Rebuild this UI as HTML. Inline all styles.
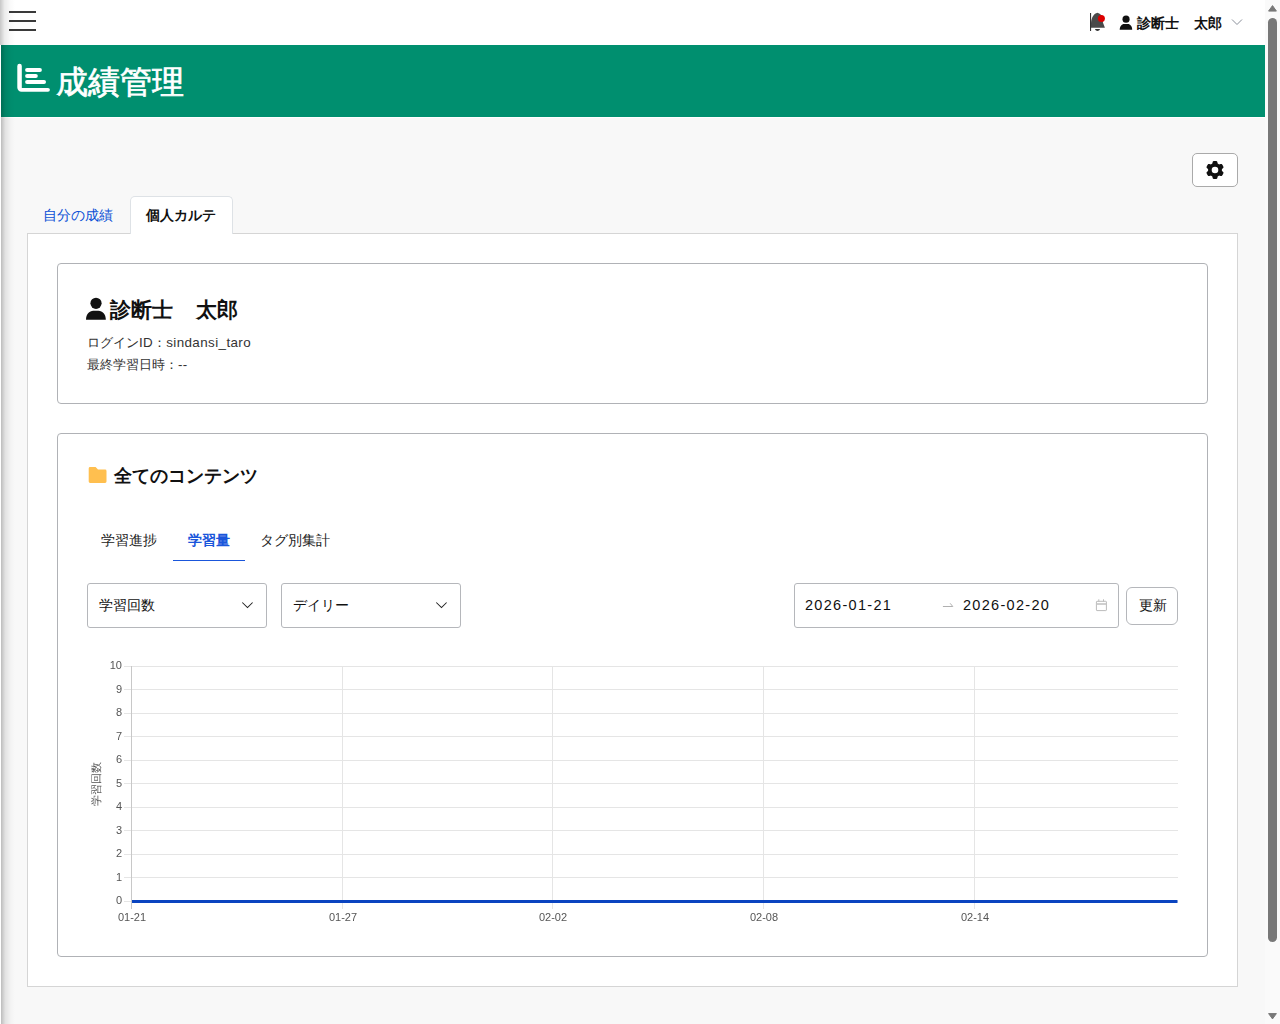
<!DOCTYPE html>
<html lang="ja">
<head>
<meta charset="utf-8">
<style>
html,body{margin:0;padding:0;width:1280px;height:1024px;overflow:hidden;}
body{position:relative;background:#f8f8f8;font-family:"Liberation Sans",sans-serif;color:#212529;}
.a{position:absolute;white-space:nowrap;}
#topbar{left:0;top:0;width:1265px;height:45px;background:#fff;}
#green{left:1px;top:45px;width:1264px;height:72px;background:#008f6f;}
#wline{left:1px;top:117px;width:1264px;height:1px;background:#fff;}
#shadow{left:1px;top:45px;width:14px;height:979px;background:linear-gradient(to right,rgba(0,0,0,.24),rgba(0,0,0,.09) 30%,rgba(0,0,0,.02) 70%,rgba(0,0,0,0) 100%);}
#shadow0{left:0;top:0;width:15px;height:45px;background:linear-gradient(to right,rgba(0,0,0,.22),rgba(0,0,0,.08) 30%,rgba(0,0,0,.02) 70%,rgba(0,0,0,0) 100%);}
#wcol{left:0;top:45px;width:1px;height:979px;background:#fff;}
.ham{left:9px;width:27px;height:2px;background:#3a3a3a;}
#title{left:56px;top:63px;font-size:32px;line-height:38px;color:#fff;font-weight:normal;-webkit-text-stroke:0.7px #fff;}
#user{left:1137px;top:13px;font-size:14px;line-height:20px;font-weight:bold;color:#111;}
#gearbtn{left:1192px;top:153px;width:44px;height:32px;border:1px solid #aaa;border-radius:5px;background:#fff;}
#tab1{left:43px;top:205px;font-size:14px;line-height:20px;color:#0b50d6;}
#tab2box{left:130px;top:196px;width:101px;height:37px;border:1px solid #dee2e6;border-bottom:none;border-radius:5px 5px 0 0;background:#fff;}
#tab2{left:146px;top:205px;font-size:14px;line-height:20px;color:#111;font-weight:bold;}
#content{left:27px;top:233px;width:1209px;height:752px;border:1px solid #d5d5d5;background:#fff;}
#tabcover{left:131px;top:233px;width:101px;height:1px;background:#fff;}
.card{border:1px solid #b0b2b6;border-radius:4px;background:#fff;}
#card1{left:57px;top:263px;width:1149px;height:139px;}
#card2{left:57px;top:433px;width:1149px;height:522px;}
#pname{left:110px;top:297px;font-size:21px;line-height:26px;font-weight:bold;color:#111;}
.info{left:87px;font-size:12.8px;line-height:18px;margin-top:1px;color:#333;}
.lat{font-size:13.4px;letter-spacing:0.4px;}
#ctitle{left:113.7px;top:465px;font-size:18px;line-height:22px;font-weight:bold;color:#111;}
.itab{top:530px;font-size:14px;line-height:20px;color:#222;}
#ul{left:173px;top:560px;width:72px;height:1px;background:#1a56db;}
.sel{top:583px;width:178px;height:43px;border:1px solid #b5b7bb;border-radius:3px;background:#fff;}
.seltxt{top:595.3px;font-size:14px;line-height:20px;color:#111;}
#dp{left:794px;top:583px;width:323px;height:43px;border:1px solid #b5b7bb;border-radius:3px;background:#fff;}
.dt{top:595px;font-size:14.5px;line-height:20px;color:#111;letter-spacing:1.3px;}
#upd{left:1126px;top:587px;width:50px;height:36px;border:1px solid #b5b7bb;border-radius:6px;background:#fff;}
#updt{left:1139px;top:595px;font-size:14px;line-height:20px;color:#111;}
.yl{font-size:11px;line-height:13px;color:#555;text-align:right;width:30px;transform:translateZ(0);}
.xl{font-size:11px;line-height:13px;color:#555;text-align:center;width:60px;transform:translateZ(0);}
#ylab{left:74px;top:778px;width:44px;height:12px;font-size:10.6px;line-height:12px;color:#555;opacity:.999;transform:rotate(-90deg);text-align:center;}
#sbtrack{left:1265px;top:0;width:15px;height:1024px;background:#fafafa;}
#thumb{left:1268px;top:18px;width:9px;height:924px;border-radius:4.5px;background:#787878;}
</style>
</head>
<body>
<div class="a" id="topbar"></div>
<div class="a" id="green"></div>
<div class="a" id="wline"></div>
<div class="a ham" style="top:11px"></div>
<div class="a ham" style="top:20px"></div>
<div class="a ham" style="top:29px"></div>

<!-- title icon -->
<svg class="a" style="left:0;top:0" width="60" height="100" viewBox="0 0 60 100">
<path fill="#fff" d="M17.3,66.1 A2.25,2.25 0 0 1 21.8,66.1 V87.9 H47.95 A1.95,1.95 0 0 1 47.95,91.8 H21.5 A4.2,4.2 0 0 1 17.3,87.6 Z"/>
<rect x="25.1" y="68" width="16.8" height="3.9" rx="1.95" fill="#fff"/>
<rect x="25.1" y="74" width="12.7" height="3.9" rx="1.95" fill="#fff"/>
<rect x="25.1" y="80.1" width="20.9" height="3.9" rx="1.95" fill="#fff"/>
</svg>
<div class="a" id="title">成績管理</div>

<!-- bell -->
<svg class="a" style="left:1086px;top:10px" width="24" height="24" viewBox="1086 10 24 24">
<path fill="#4a4a4a" d="M1097.4,12.8 C1100.8,13.6 1102.9,16.5 1102.9,20.5 V22.5 L1104.9,27.7 H1091 V23 C1091.5,17 1094,13.6 1097.4,12.8 Z"/>
<path fill="#333" d="M1095,29 H1100 C1099.5,30.5 1098.5,30.9 1097.5,30.9 C1096.5,30.9 1095.5,30.5 1095,29 Z"/>
<rect x="1090" y="13" width="1.1" height="18" fill="#333"/>
<circle cx="1101.4" cy="18.55" r="3.5" fill="#dd0000"/>
</svg>
<!-- person small -->
<svg class="a" style="left:1119px;top:15px" width="14" height="16" viewBox="0 0 14 16">
<circle cx="7.05" cy="4.15" r="3.55" fill="#111"/>
<path fill="#111" d="M0.7,14.8 C0.7,11.4 2.6,8.9 5.2,8.9 H8.8 C11.4,8.9 13.2,11.4 13.2,14.8 Z"/>
</svg>
<div class="a" id="user">診断士<span style="margin-right:1.4px">　</span>太郎</div>
<svg class="a" style="left:1230px;top:16px" width="14" height="12" viewBox="0 0 14 12">
<path d="M2,3.5 L7,8.5 L12,3.5" fill="none" stroke="#8a8f9a" stroke-width="1"/>
</svg>

<!-- gear button -->
<div class="a" id="gearbtn"></div>
<svg class="a" style="left:1205px;top:160px" width="20" height="20" viewBox="0 0 20 20">
<path fill="#111" fill-rule="evenodd" d="M16.90,10.00 L16.90,9.88 L16.90,9.76 L16.89,9.64 L16.88,9.52 L16.87,9.40 L16.90,9.27 L16.97,9.14 L17.08,9.00 L17.23,8.85 L17.42,8.69 L17.60,8.52 L17.78,8.35 L17.95,8.16 L18.12,7.98 L18.29,7.78 L18.41,7.59 L18.49,7.41 L18.52,7.23 L18.51,7.07 L18.46,6.92 L18.40,6.77 L18.34,6.63 L18.28,6.48 L18.22,6.34 L18.16,6.20 L18.09,6.05 L18.02,5.91 L17.95,5.77 L17.87,5.64 L17.79,5.50 L17.71,5.36 L17.63,5.23 L17.55,5.10 L17.46,4.97 L17.37,4.84 L17.28,4.71 L17.19,4.58 L17.09,4.46 L16.99,4.34 L16.89,4.21 L16.79,4.10 L16.66,4.01 L16.49,3.95 L16.29,3.92 L16.07,3.93 L15.81,3.98 L15.57,4.03 L15.32,4.09 L15.08,4.16 L14.84,4.23 L14.61,4.31 L14.40,4.36 L14.23,4.39 L14.08,4.38 L13.96,4.35 L13.86,4.28 L13.76,4.21 L13.66,4.15 L13.55,4.09 L13.45,4.02 L13.35,3.97 L13.24,3.91 L13.13,3.85 L13.02,3.80 L12.92,3.75 L12.82,3.66 L12.75,3.53 L12.68,3.37 L12.62,3.17 L12.58,2.92 L12.52,2.68 L12.46,2.44 L12.39,2.20 L12.31,1.95 L12.22,1.71 L12.12,1.51 L12.00,1.35 L11.86,1.24 L11.72,1.17 L11.56,1.14 L11.41,1.11 L11.25,1.09 L11.10,1.07 L10.94,1.05 L10.78,1.03 L10.63,1.02 L10.47,1.01 L10.31,1.01 L10.16,1.00 L10.00,1.00 L9.84,1.00 L9.69,1.01 L9.53,1.01 L9.37,1.02 L9.22,1.03 L9.06,1.05 L8.90,1.07 L8.75,1.09 L8.59,1.11 L8.44,1.14 L8.28,1.17 L8.14,1.24 L8.00,1.35 L7.88,1.51 L7.78,1.71 L7.69,1.95 L7.61,2.20 L7.54,2.44 L7.48,2.68 L7.42,2.92 L7.38,3.17 L7.32,3.37 L7.25,3.53 L7.18,3.66 L7.08,3.75 L6.98,3.80 L6.87,3.85 L6.76,3.91 L6.65,3.97 L6.55,4.02 L6.45,4.09 L6.34,4.15 L6.24,4.21 L6.14,4.28 L6.04,4.35 L5.92,4.38 L5.77,4.39 L5.60,4.36 L5.39,4.31 L5.16,4.23 L4.92,4.16 L4.68,4.09 L4.43,4.03 L4.19,3.98 L3.93,3.93 L3.71,3.92 L3.51,3.95 L3.34,4.01 L3.21,4.10 L3.11,4.21 L3.01,4.34 L2.91,4.46 L2.81,4.58 L2.72,4.71 L2.63,4.84 L2.54,4.97 L2.45,5.10 L2.37,5.23 L2.29,5.36 L2.21,5.50 L2.13,5.64 L2.05,5.77 L1.98,5.91 L1.91,6.05 L1.84,6.20 L1.78,6.34 L1.72,6.48 L1.66,6.63 L1.60,6.77 L1.54,6.92 L1.49,7.07 L1.48,7.23 L1.51,7.41 L1.59,7.59 L1.71,7.78 L1.88,7.98 L2.05,8.16 L2.22,8.35 L2.40,8.52 L2.58,8.69 L2.77,8.85 L2.92,9.00 L3.03,9.14 L3.10,9.27 L3.13,9.40 L3.12,9.52 L3.11,9.64 L3.10,9.76 L3.10,9.88 L3.10,10.00 L3.10,10.12 L3.10,10.24 L3.11,10.36 L3.12,10.48 L3.13,10.60 L3.10,10.73 L3.03,10.86 L2.92,11.00 L2.77,11.15 L2.58,11.31 L2.40,11.48 L2.22,11.65 L2.05,11.84 L1.88,12.02 L1.71,12.22 L1.59,12.41 L1.51,12.59 L1.48,12.77 L1.49,12.93 L1.54,13.08 L1.60,13.23 L1.66,13.37 L1.72,13.52 L1.78,13.66 L1.84,13.80 L1.91,13.95 L1.98,14.09 L2.05,14.23 L2.13,14.36 L2.21,14.50 L2.29,14.64 L2.37,14.77 L2.45,14.90 L2.54,15.03 L2.63,15.16 L2.72,15.29 L2.81,15.42 L2.91,15.54 L3.01,15.66 L3.11,15.79 L3.21,15.90 L3.34,15.99 L3.51,16.05 L3.71,16.08 L3.93,16.07 L4.19,16.02 L4.43,15.97 L4.68,15.91 L4.92,15.84 L5.16,15.77 L5.39,15.69 L5.60,15.64 L5.77,15.61 L5.92,15.62 L6.04,15.65 L6.14,15.72 L6.24,15.79 L6.34,15.85 L6.45,15.91 L6.55,15.98 L6.65,16.03 L6.76,16.09 L6.87,16.15 L6.98,16.20 L7.08,16.25 L7.18,16.34 L7.25,16.47 L7.32,16.63 L7.38,16.83 L7.42,17.08 L7.48,17.32 L7.54,17.56 L7.61,17.80 L7.69,18.05 L7.78,18.29 L7.88,18.49 L8.00,18.65 L8.14,18.76 L8.28,18.83 L8.44,18.86 L8.59,18.89 L8.75,18.91 L8.90,18.93 L9.06,18.95 L9.22,18.97 L9.37,18.98 L9.53,18.99 L9.69,18.99 L9.84,19.00 L10.00,19.00 L10.16,19.00 L10.31,18.99 L10.47,18.99 L10.63,18.98 L10.78,18.97 L10.94,18.95 L11.10,18.93 L11.25,18.91 L11.41,18.89 L11.56,18.86 L11.72,18.83 L11.86,18.76 L12.00,18.65 L12.12,18.49 L12.22,18.29 L12.31,18.05 L12.39,17.80 L12.46,17.56 L12.52,17.32 L12.58,17.08 L12.62,16.83 L12.68,16.63 L12.75,16.47 L12.82,16.34 L12.92,16.25 L13.02,16.20 L13.13,16.15 L13.24,16.09 L13.35,16.03 L13.45,15.98 L13.55,15.91 L13.66,15.85 L13.76,15.79 L13.86,15.72 L13.96,15.65 L14.08,15.62 L14.23,15.61 L14.40,15.64 L14.61,15.69 L14.84,15.77 L15.08,15.84 L15.32,15.91 L15.57,15.97 L15.81,16.02 L16.07,16.07 L16.29,16.08 L16.49,16.05 L16.66,15.99 L16.79,15.90 L16.89,15.79 L16.99,15.66 L17.09,15.54 L17.19,15.42 L17.28,15.29 L17.37,15.16 L17.46,15.03 L17.55,14.90 L17.63,14.77 L17.71,14.64 L17.79,14.50 L17.87,14.36 L17.95,14.23 L18.02,14.09 L18.09,13.95 L18.16,13.80 L18.22,13.66 L18.28,13.52 L18.34,13.37 L18.40,13.23 L18.46,13.08 L18.51,12.93 L18.52,12.77 L18.49,12.59 L18.41,12.41 L18.29,12.22 L18.12,12.02 L17.95,11.84 L17.78,11.65 L17.60,11.48 L17.42,11.31 L17.23,11.15 L17.08,11.00 L16.97,10.86 L16.90,10.73 L16.87,10.60 L16.88,10.48 L16.89,10.36 L16.90,10.24 L16.90,10.12 Z M10,6.7 A3.3,3.3 0 1 0 10,13.3 A3.3,3.3 0 1 0 10,6.7 Z"/>
</svg>

<!-- tabs -->
<div class="a" id="content"></div>
<div class="a" id="tab2box"></div>
<div class="a" id="tab1">自分の成績</div>
<div class="a" id="tab2">個人カルテ</div>

<!-- card 1 -->
<div class="a card" id="card1"></div>
<svg class="a" style="left:86px;top:297px" width="21" height="23" viewBox="0 0 21 23">
<circle cx="10" cy="6.3" r="5.6" fill="#111"/>
<path fill="#111" d="M0,22.8 C0,17.2 3.2,13.7 7.4,13.7 H12.4 C16.6,13.7 19.8,17.2 19.8,22.8 Z"/>
</svg>
<div class="a" id="pname">診断士<span style="margin-right:1.6px">　</span>太郎</div>
<div class="a info" style="top:333px">ログイン<span class="lat">ID</span>：<span class="lat">sindansi_taro</span></div>
<div class="a info" style="top:355px">最終学習日時：<span class="lat">--</span></div>

<!-- card 2 -->
<div class="a card" id="card2"></div>
<svg class="a" style="left:88px;top:466px" width="20" height="18" viewBox="0 0 20 18">
<path fill="#ffbf4f" d="M2.1,1.1 H7.6 L10,3.6 H17.1 A1.4,1.4 0 0 1 18.5,5 V15.5 A1.4,1.4 0 0 1 17.1,16.9 H2.1 A1.4,1.4 0 0 1 0.7,15.5 V2.5 A1.4,1.4 0 0 1 2.1,1.1 Z"/>
</svg>
<div class="a" id="ctitle">全てのコンテンツ</div>

<div class="a itab" style="left:101px">学習進捗</div>
<div class="a itab" style="left:188px;color:#1a56db;font-weight:bold">学習量</div>
<div class="a itab" style="left:260px">タグ別集計</div>
<div class="a" id="ul"></div>

<div class="a sel" style="left:87px"></div>
<div class="a seltxt" style="left:99px">学習回数</div>
<svg class="a" style="left:241px;top:600px" width="13" height="10" viewBox="0 0 13 10">
<path d="M1.3,2.5 L6.5,7.6 L11.6,2.5" fill="none" stroke="#222" stroke-width="1.05"/>
</svg>
<div class="a sel" style="left:281px"></div>
<div class="a seltxt" style="left:293px">デイリー</div>
<svg class="a" style="left:435px;top:600px" width="13" height="10" viewBox="0 0 13 10">
<path d="M1.3,2.5 L6.5,7.6 L11.6,2.5" fill="none" stroke="#222" stroke-width="1.05"/>
</svg>

<div class="a" id="dp"></div>
<div class="a dt" style="left:805px">2026-01-21</div>
<svg class="a" style="left:940px;top:600px" width="16" height="10" viewBox="0 0 16 10">
<path d="M3.3,6.5 H12.8 L10.4,3.6" fill="none" stroke="#b0b0b0" stroke-width="1" stroke-linecap="round" stroke-linejoin="round"/>
</svg>
<div class="a dt" style="left:963px">2026-02-20</div>
<svg class="a" style="left:1094px;top:598px" width="14" height="15" viewBox="0 0 14 15">
<rect x="2.4" y="3.3" width="10" height="9.3" rx="0.6" fill="none" stroke="#bbb" stroke-width="1"/>
<path d="M2.4,6 H12.4" stroke="#c4c4c4" stroke-width="1.6"/>
<path d="M4.8,1.3 V3.6 M9.5,1.3 V3.6" stroke="#bbb" stroke-width="1"/>
</svg>
<div class="a" id="upd"></div>
<div class="a" id="updt">更新</div>

<!-- chart -->
<svg class="a" style="left:0;top:0" width="1280" height="1024" viewBox="0 0 1280 1024">
<g stroke="#e5e5e5" stroke-width="1">
<path d="M124,666.5 H1178 M124,689.5 H1178 M124,713.5 H1178 M124,736.5 H1178 M124,760.5 H1178 M124,783.5 H1178 M124,807.5 H1178 M124,830.5 H1178 M124,854.5 H1178 M124,877.5 H1178 M124,901.5 H1178"/>
<path d="M342.5,666 V909 M552.5,666 V909 M763.5,666 V909 M974.5,666 V909"/>
</g>
<path d="M131.5,666 V909" stroke="#c8c8c8" stroke-width="1"/>
<path d="M132,901.4 H1177.5" stroke="#0a44c0" stroke-width="3"/>
</svg>
<div class="a yl" style="left:92px;top:659px">10</div>
<div class="a yl" style="left:92px;top:683px">9</div>
<div class="a yl" style="left:92px;top:706px">8</div>
<div class="a yl" style="left:92px;top:730px">7</div>
<div class="a yl" style="left:92px;top:753px">6</div>
<div class="a yl" style="left:92px;top:777px">5</div>
<div class="a yl" style="left:92px;top:800px">4</div>
<div class="a yl" style="left:92px;top:824px">3</div>
<div class="a yl" style="left:92px;top:847px">2</div>
<div class="a yl" style="left:92px;top:871px">1</div>
<div class="a yl" style="left:92px;top:894px">0</div>
<div class="a xl" style="left:102px;top:911px">01-21</div>
<div class="a xl" style="left:313px;top:911px">01-27</div>
<div class="a xl" style="left:523px;top:911px">02-02</div>
<div class="a xl" style="left:734px;top:911px">02-08</div>
<div class="a xl" style="left:945px;top:911px">02-14</div>
<div class="a" id="ylab">学習回数</div>

<!-- left shadow -->
<div class="a" id="shadow"></div>
<div class="a" id="shadow0"></div>
<div class="a" id="wcol"></div>

<!-- scrollbar -->
<div class="a" id="sbtrack"></div>
<svg class="a" style="left:1265px;top:0" width="15" height="1024" viewBox="0 0 15 1024">
<path d="M7.5,5.6 L11.4,11.1 H3.6 Z" fill="#787878" stroke="#787878" stroke-width="1" stroke-linejoin="round"/>
<path d="M7.5,1018.9 L11.4,1013.6 H3.6 Z" fill="#787878" stroke="#787878" stroke-width="1" stroke-linejoin="round"/>
</svg>
<div class="a" id="thumb"></div>
</body>
</html>
